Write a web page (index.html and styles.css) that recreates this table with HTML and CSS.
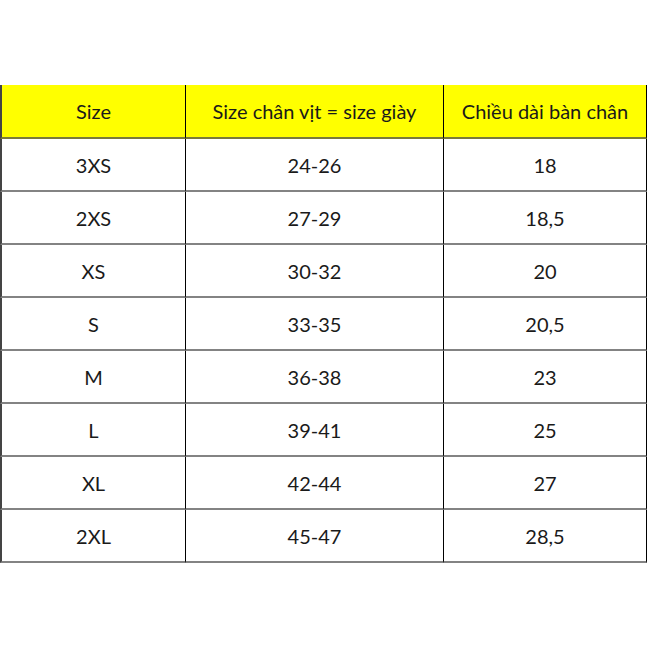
FILE: index.html
```html
<!DOCTYPE html>
<html lang="vi">
<head>
<meta charset="utf-8">
<title>Bảng size</title>
<link rel="stylesheet" href="styles.css">
</head>
<body>
<table class="size-table">
  <colgroup>
    <col class="c1"><col class="c2"><col class="c3">
  </colgroup>
  <thead>
    <tr class="head">
      <th>Size</th><th>Size chân vịt = size giày</th><th>Chiều dài bàn chân</th>
    </tr>
  </thead>
  <tbody>
    <tr><td>3XS</td><td>24-26</td><td>18</td></tr>
    <tr><td>2XS</td><td>27-29</td><td>18,5</td></tr>
    <tr><td>XS</td><td>30-32</td><td>20</td></tr>
    <tr><td>S</td><td>33-35</td><td>20,5</td></tr>
    <tr><td>M</td><td>36-38</td><td>23</td></tr>
    <tr><td>L</td><td>39-41</td><td>25</td></tr>
    <tr><td>XL</td><td>42-44</td><td>27</td></tr>
    <tr><td>2XL</td><td>45-47</td><td>28,5</td></tr>
  </tbody>
</table>
</body>
</html>
```

FILE: styles.css
```css
html, body {
  margin: 0;
  padding: 0;
  background: #ffffff;
}
body {
  padding-top: 85px;
  font-family: Lato, "Open Sans", "Liberation Sans", sans-serif;
  color: #1a1a1a;
}
.size-table {
  border-collapse: separate;
  border-spacing: 0;
  table-layout: fixed;
  width: 647px;
}
.c1 { width: 186px; }
.c2 { width: 258px; }
.c3 { width: 203px; }
.size-table th,
.size-table td {
  height: 51px;
  padding: 0;
  text-align: center;
  vertical-align: middle;
  font-size: 20px;
  font-weight: 400;
  border-bottom: 2px solid #838383;
  border-right: 1px solid #000000;
  box-sizing: content-box;
}
.size-table th:first-child,
.size-table td:first-child {
  border-left: 2px solid #444444;
}
.head th {
  background: #ffff00;
  height: 52px;
  border-bottom-color: #7a7a3a;
}
```
